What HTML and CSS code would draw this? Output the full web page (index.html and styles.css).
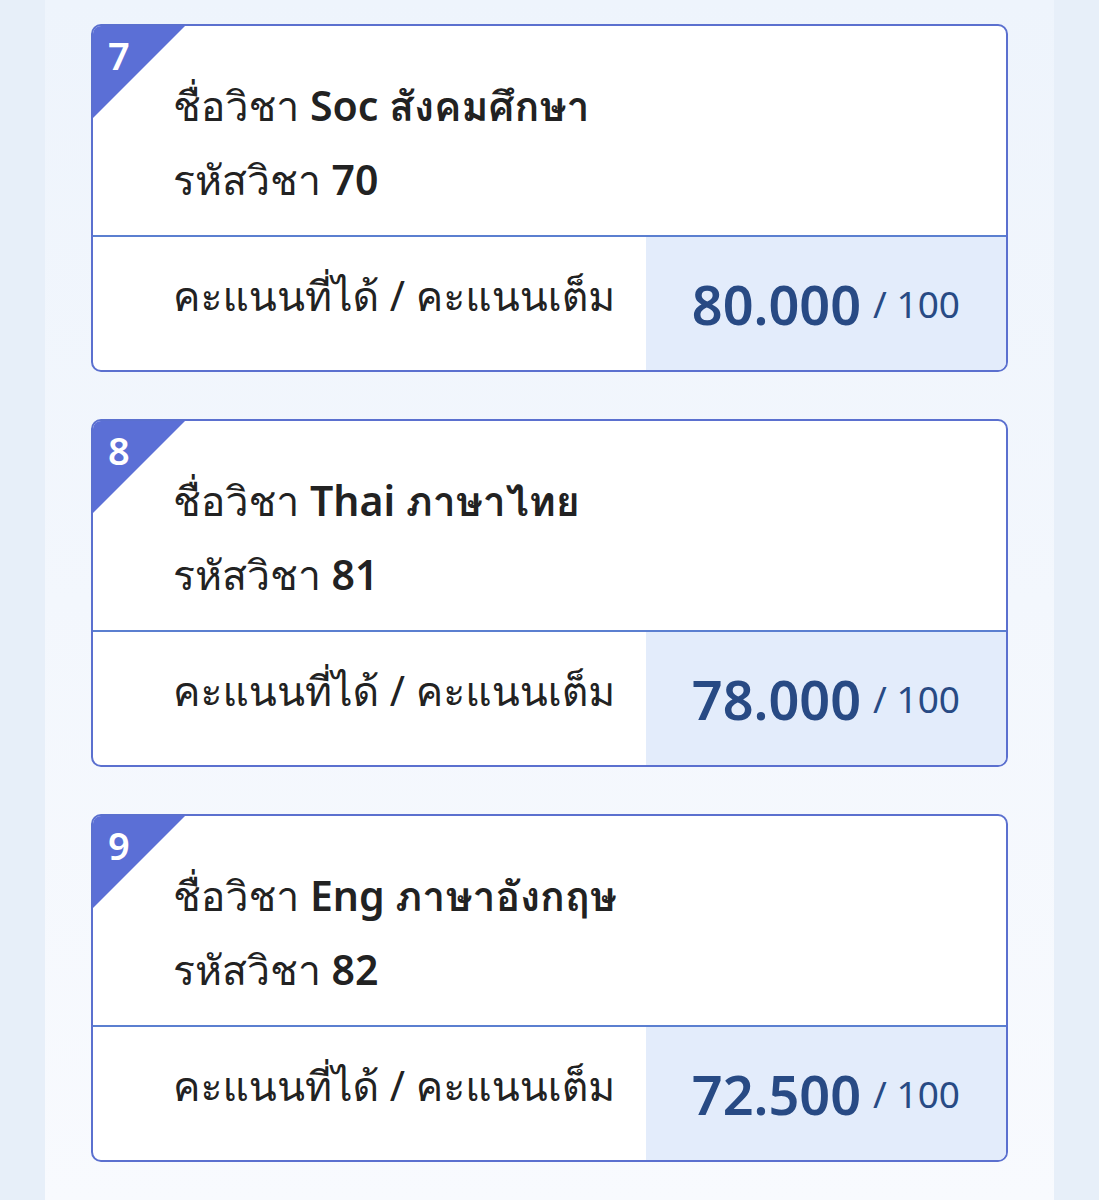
FILE: index.html
```html
<!DOCTYPE html>
<html lang="th">
<head>
<meta charset="UTF-8" />
<meta name="viewport" content="width=device-width, initial-scale=1" />
<title>ผลการเรียน</title>
<link rel="stylesheet" href="styles.css">
</head>
<body>

<div class="page">

<div class="subject-card">
<span class="corner">7</span>
<div class="subject-info">
<p>ชื่อวิชา <b>Soc สังคมศึกษา</b></p>
<p>รหัสวิชา <b>70</b></p>
</div>
<div class="subject-score">
<div class="score-label">คะแนนที่ได้ / คะแนนเต็ม</div>
<div class="score-value"><b>80.000</b> / 100</div>
</div>
</div>

<div class="subject-card">
<span class="corner">8</span>
<div class="subject-info">
<p>ชื่อวิชา <b>Thai ภาษาไทย</b></p>
<p>รหัสวิชา <b>81</b></p>
</div>
<div class="subject-score">
<div class="score-label">คะแนนที่ได้ / คะแนนเต็ม</div>
<div class="score-value"><b>78.000</b> / 100</div>
</div>
</div>

<div class="subject-card">
<span class="corner">9</span>
<div class="subject-info">
<p>ชื่อวิชา <b>Eng ภาษาอังกฤษ</b></p>
<p>รหัสวิชา <b>82</b></p>
</div>
<div class="subject-score">
<div class="score-label">คะแนนที่ได้ / คะแนนเต็ม</div>
<div class="score-value"><b>72.500</b> / 100</div>
</div>
</div>

</div>

</body>
</html>
```

FILE: styles.css
```css
body {
margin: 0;
font-family: 'Noto Sans', 'Loma', 'Noto Sans Thai Looped', sans-serif;
background: #e7eff9;
color: #222;
}
.page {
width: 1009px;
margin-left: 45px;
min-height: 1200px;
box-sizing: border-box;
padding: 24px 46px 40px;
background: linear-gradient(180deg, #eef4fc, #f8fafe);
display: flex;
flex-direction: column;
gap: 47px;
}
.subject-card {
position: relative;
background: white;
border: 2px solid #5b70cf;
border-radius: 10px;
overflow: hidden;
}
.corner {
position: absolute;
top: 0;
left: 0;
width: 92px;
height: 92px;
box-sizing: border-box;
padding: 10px 0 0 15px;
background: #5b6fd6;
clip-path: polygon(0 0, 100% 0, 0 100%);
color: white;
font-family: 'Noto Sans', sans-serif;
font-weight: 600;
font-size: 38px;
line-height: 1;
}
.subject-info {
padding: 42px 80px 19px;
border-bottom: 2px solid #5b7fd0;
}
.subject-info p {
margin: 0;
font-size: 41px;
line-height: 74px;
}
.subject-info b {
font-weight: 600;
}
.subject-score {
display: flex;
height: 133px;
}
.score-label {
flex: 1;
display: flex;
align-items: center;
padding-left: 80px;
padding-bottom: 14px;
font-size: 41px;
}
.score-value {
width: 360px;
box-sizing: border-box;
background: #e3ecfb;
color: #284a84;
display: flex;
align-items: center;
justify-content: flex-end;
gap: 12px;
padding-right: 46px;
font-size: 37px;
}
.score-value b {
font-size: 54px;
font-weight: 600;
}
```
